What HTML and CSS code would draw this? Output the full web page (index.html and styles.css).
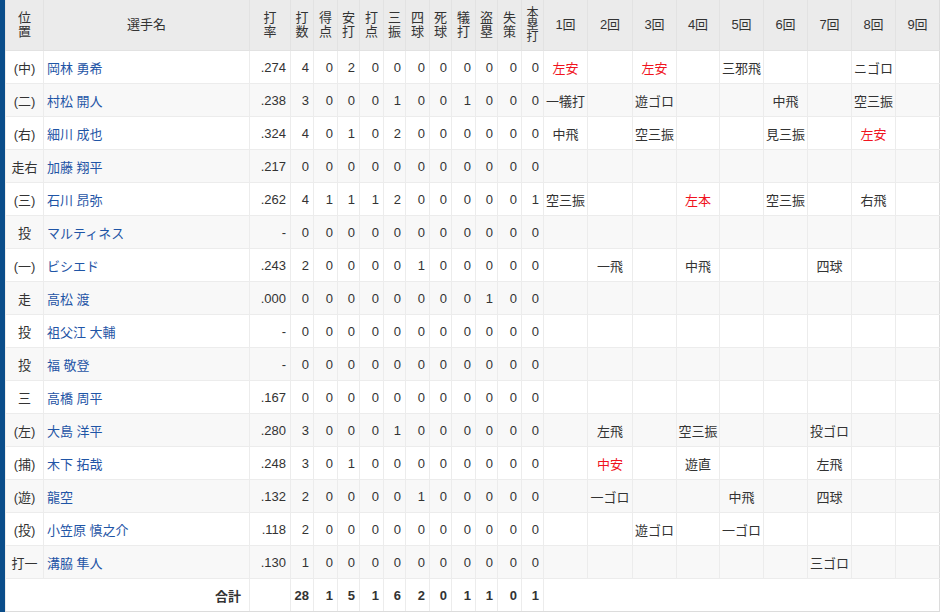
FILE: index.html
```html
<!DOCTYPE html>
<html lang="ja">
<head>
<meta charset="utf-8">
<title>打撃成績</title>
<link rel="stylesheet" href="styles.css">
</head>
<body>
<div class="wrap">
<table class="score">
<colgroup>
<col class="c-pos"><col class="c-name"><col class="c-avg">
<col class="c-s1"><col class="c-s2"><col class="c-s3"><col class="c-s2"><col class="c-s3"><col class="c-s2"><col class="c-s3"><col class="c-s2"><col class="c-s3"><col class="c-s2"><col class="c-s3">
<col class="c-i"><col class="c-i2"><col class="c-i"><col class="c-i3"><col class="c-i"><col class="c-i"><col class="c-i"><col class="c-i"><col class="c-i">
</colgroup>
<thead>
<tr>
<th><span class="v">位置</span></th>
<th>選手名</th>
<th><span class="v">打率</span></th>
<th><span class="v">打数</span></th>
<th><span class="v">得点</span></th>
<th><span class="v">安打</span></th>
<th><span class="v">打点</span></th>
<th><span class="v">三振</span></th>
<th><span class="v">四球</span></th>
<th><span class="v">死球</span></th>
<th><span class="v">犠打</span></th>
<th><span class="v">盗塁</span></th>
<th><span class="v">失策</span></th>
<th><span class="v v3">本塁打</span></th>
<th>1回</th><th>2回</th><th>3回</th><th>4回</th><th>5回</th><th>6回</th><th>7回</th><th>8回</th><th>9回</th>
</tr>
</thead>
<tbody>
<tr><td class="pos">(中)</td><td class="name"><a href="#">岡林 勇希</a></td><td class="num">.274</td><td class="num">4</td><td class="num">0</td><td class="num">2</td><td class="num">0</td><td class="num">0</td><td class="num">0</td><td class="num">0</td><td class="num">0</td><td class="num">0</td><td class="num">0</td><td class="num">0</td>
<td class="inn hit">左安</td><td class="inn"></td><td class="inn hit">左安</td><td class="inn"></td><td class="inn">三邪飛</td><td class="inn"></td><td class="inn"></td><td class="inn">ニゴロ</td><td class="inn"></td></tr>
<tr><td class="pos">(二)</td><td class="name"><a href="#">村松 開人</a></td><td class="num">.238</td><td class="num">3</td><td class="num">0</td><td class="num">0</td><td class="num">0</td><td class="num">1</td><td class="num">0</td><td class="num">0</td><td class="num">1</td><td class="num">0</td><td class="num">0</td><td class="num">0</td>
<td class="inn">一犠打</td><td class="inn"></td><td class="inn">遊ゴロ</td><td class="inn"></td><td class="inn"></td><td class="inn">中飛</td><td class="inn"></td><td class="inn">空三振</td><td class="inn"></td></tr>
<tr><td class="pos">(右)</td><td class="name"><a href="#">細川 成也</a></td><td class="num">.324</td><td class="num">4</td><td class="num">0</td><td class="num">1</td><td class="num">0</td><td class="num">2</td><td class="num">0</td><td class="num">0</td><td class="num">0</td><td class="num">0</td><td class="num">0</td><td class="num">0</td>
<td class="inn">中飛</td><td class="inn"></td><td class="inn">空三振</td><td class="inn"></td><td class="inn"></td><td class="inn">見三振</td><td class="inn"></td><td class="inn hit">左安</td><td class="inn"></td></tr>
<tr><td class="pos">走右</td><td class="name"><a href="#">加藤 翔平</a></td><td class="num">.217</td><td class="num">0</td><td class="num">0</td><td class="num">0</td><td class="num">0</td><td class="num">0</td><td class="num">0</td><td class="num">0</td><td class="num">0</td><td class="num">0</td><td class="num">0</td><td class="num">0</td>
<td class="inn"></td><td class="inn"></td><td class="inn"></td><td class="inn"></td><td class="inn"></td><td class="inn"></td><td class="inn"></td><td class="inn"></td><td class="inn"></td></tr>
<tr><td class="pos">(三)</td><td class="name"><a href="#">石川 昂弥</a></td><td class="num">.262</td><td class="num">4</td><td class="num">1</td><td class="num">1</td><td class="num">1</td><td class="num">2</td><td class="num">0</td><td class="num">0</td><td class="num">0</td><td class="num">0</td><td class="num">0</td><td class="num">1</td>
<td class="inn">空三振</td><td class="inn"></td><td class="inn"></td><td class="inn hit">左本</td><td class="inn"></td><td class="inn">空三振</td><td class="inn"></td><td class="inn">右飛</td><td class="inn"></td></tr>
<tr><td class="pos">投</td><td class="name"><a href="#">マルティネス</a></td><td class="num">-</td><td class="num">0</td><td class="num">0</td><td class="num">0</td><td class="num">0</td><td class="num">0</td><td class="num">0</td><td class="num">0</td><td class="num">0</td><td class="num">0</td><td class="num">0</td><td class="num">0</td>
<td class="inn"></td><td class="inn"></td><td class="inn"></td><td class="inn"></td><td class="inn"></td><td class="inn"></td><td class="inn"></td><td class="inn"></td><td class="inn"></td></tr>
<tr><td class="pos">(一)</td><td class="name"><a href="#">ビシエド</a></td><td class="num">.243</td><td class="num">2</td><td class="num">0</td><td class="num">0</td><td class="num">0</td><td class="num">0</td><td class="num">1</td><td class="num">0</td><td class="num">0</td><td class="num">0</td><td class="num">0</td><td class="num">0</td>
<td class="inn"></td><td class="inn">一飛</td><td class="inn"></td><td class="inn">中飛</td><td class="inn"></td><td class="inn"></td><td class="inn">四球</td><td class="inn"></td><td class="inn"></td></tr>
<tr><td class="pos">走</td><td class="name"><a href="#">高松 渡</a></td><td class="num">.000</td><td class="num">0</td><td class="num">0</td><td class="num">0</td><td class="num">0</td><td class="num">0</td><td class="num">0</td><td class="num">0</td><td class="num">0</td><td class="num">1</td><td class="num">0</td><td class="num">0</td>
<td class="inn"></td><td class="inn"></td><td class="inn"></td><td class="inn"></td><td class="inn"></td><td class="inn"></td><td class="inn"></td><td class="inn"></td><td class="inn"></td></tr>
<tr><td class="pos">投</td><td class="name"><a href="#">祖父江 大輔</a></td><td class="num">-</td><td class="num">0</td><td class="num">0</td><td class="num">0</td><td class="num">0</td><td class="num">0</td><td class="num">0</td><td class="num">0</td><td class="num">0</td><td class="num">0</td><td class="num">0</td><td class="num">0</td>
<td class="inn"></td><td class="inn"></td><td class="inn"></td><td class="inn"></td><td class="inn"></td><td class="inn"></td><td class="inn"></td><td class="inn"></td><td class="inn"></td></tr>
<tr><td class="pos">投</td><td class="name"><a href="#">福 敬登</a></td><td class="num">-</td><td class="num">0</td><td class="num">0</td><td class="num">0</td><td class="num">0</td><td class="num">0</td><td class="num">0</td><td class="num">0</td><td class="num">0</td><td class="num">0</td><td class="num">0</td><td class="num">0</td>
<td class="inn"></td><td class="inn"></td><td class="inn"></td><td class="inn"></td><td class="inn"></td><td class="inn"></td><td class="inn"></td><td class="inn"></td><td class="inn"></td></tr>
<tr><td class="pos">三</td><td class="name"><a href="#">高橋 周平</a></td><td class="num">.167</td><td class="num">0</td><td class="num">0</td><td class="num">0</td><td class="num">0</td><td class="num">0</td><td class="num">0</td><td class="num">0</td><td class="num">0</td><td class="num">0</td><td class="num">0</td><td class="num">0</td>
<td class="inn"></td><td class="inn"></td><td class="inn"></td><td class="inn"></td><td class="inn"></td><td class="inn"></td><td class="inn"></td><td class="inn"></td><td class="inn"></td></tr>
<tr><td class="pos">(左)</td><td class="name"><a href="#">大島 洋平</a></td><td class="num">.280</td><td class="num">3</td><td class="num">0</td><td class="num">0</td><td class="num">0</td><td class="num">1</td><td class="num">0</td><td class="num">0</td><td class="num">0</td><td class="num">0</td><td class="num">0</td><td class="num">0</td>
<td class="inn"></td><td class="inn">左飛</td><td class="inn"></td><td class="inn">空三振</td><td class="inn"></td><td class="inn"></td><td class="inn">投ゴロ</td><td class="inn"></td><td class="inn"></td></tr>
<tr><td class="pos">(捕)</td><td class="name"><a href="#">木下 拓哉</a></td><td class="num">.248</td><td class="num">3</td><td class="num">0</td><td class="num">1</td><td class="num">0</td><td class="num">0</td><td class="num">0</td><td class="num">0</td><td class="num">0</td><td class="num">0</td><td class="num">0</td><td class="num">0</td>
<td class="inn"></td><td class="inn hit">中安</td><td class="inn"></td><td class="inn">遊直</td><td class="inn"></td><td class="inn"></td><td class="inn">左飛</td><td class="inn"></td><td class="inn"></td></tr>
<tr><td class="pos">(遊)</td><td class="name"><a href="#">龍空</a></td><td class="num">.132</td><td class="num">2</td><td class="num">0</td><td class="num">0</td><td class="num">0</td><td class="num">0</td><td class="num">1</td><td class="num">0</td><td class="num">0</td><td class="num">0</td><td class="num">0</td><td class="num">0</td>
<td class="inn"></td><td class="inn">一ゴロ</td><td class="inn"></td><td class="inn"></td><td class="inn">中飛</td><td class="inn"></td><td class="inn">四球</td><td class="inn"></td><td class="inn"></td></tr>
<tr><td class="pos">(投)</td><td class="name"><a href="#">小笠原 慎之介</a></td><td class="num">.118</td><td class="num">2</td><td class="num">0</td><td class="num">0</td><td class="num">0</td><td class="num">0</td><td class="num">0</td><td class="num">0</td><td class="num">0</td><td class="num">0</td><td class="num">0</td><td class="num">0</td>
<td class="inn"></td><td class="inn"></td><td class="inn">遊ゴロ</td><td class="inn"></td><td class="inn">一ゴロ</td><td class="inn"></td><td class="inn"></td><td class="inn"></td><td class="inn"></td></tr>
<tr><td class="pos">打一</td><td class="name"><a href="#">溝脇 隼人</a></td><td class="num">.130</td><td class="num">1</td><td class="num">0</td><td class="num">0</td><td class="num">0</td><td class="num">0</td><td class="num">0</td><td class="num">0</td><td class="num">0</td><td class="num">0</td><td class="num">0</td><td class="num">0</td>
<td class="inn"></td><td class="inn"></td><td class="inn"></td><td class="inn"></td><td class="inn"></td><td class="inn"></td><td class="inn">三ゴロ</td><td class="inn"></td><td class="inn"></td></tr>
<tr class="total"><td colspan="2" class="tlabel">合計</td><td class="num"></td><td class="num">28</td><td class="num">1</td><td class="num">5</td><td class="num">1</td><td class="num">6</td><td class="num">2</td><td class="num">0</td><td class="num">1</td><td class="num">1</td><td class="num">0</td><td class="num">1</td><td colspan="9" class="blank"></td></tr>
</tbody>
</table>
</div>
</body>
</html>
```

FILE: styles.css
```css
html, body {
  margin: 0;
  padding: 0;
  background: #fff;
}
body {
  font-family: "Liberation Sans", "Noto Sans CJK JP", sans-serif;
  font-size: 13px;
  color: #333;
}
.wrap {
  width: 935px;
  border-left: 5px solid #0a4d8a;
}
.score {
  width: 935px;
  table-layout: fixed;
  border-collapse: collapse;
}
.c-pos { width: 38px; }
.c-name { width: 206px; }
.c-avg { width: 41px; }
.c-s1 { width: 23px; }
.c-s2 { width: 24px; }
.c-s3 { width: 22px; }
.c-i { width: 44px; }
.c-i2 { width: 45px; }
.c-i3 { width: 43px; }
.score th,
.score td {
  border: 1px solid #ececec;
  padding: 0;
}
.score th {
  background: #ebebeb;
  height: 50px;
  font-weight: normal;
  text-align: center;
  vertical-align: middle;
  line-height: 14px;
  border-color: #e2e2e2;
  border-top: 0;
}
.score th:last-child,
.score td:last-child {
  border-right-color: #dcdcdc;
}
.v {
  display: inline-block;
  width: 1em;
  word-break: break-all;
}
.v3 {
  font-size: 12px;
  line-height: 12px;
}
.score td {
  height: 32px;
  vertical-align: middle;
}
.score tbody tr:nth-child(even) td {
  background: #f8f8f8;
}
.pos { text-align: center; }
.name { padding-left: 3px !important; }
.name a {
  color: #1f55a6;
  text-decoration: none;
}
.num {
  text-align: right;
  padding-right: 4px !important;
}
.inn { text-align: center; }
.hit { color: #f0141e; }
.total td {
  font-weight: bold;
  border-bottom: 1px solid #dcdcdc;
}
.tlabel {
  text-align: right;
  padding-right: 8px !important;
}
```
